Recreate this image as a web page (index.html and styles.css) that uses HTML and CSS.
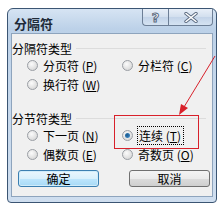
FILE: index.html
```html
<!DOCTYPE html>
<html lang="zh-CN">
<head>
    <meta charset="UTF-8">
    <title>分隔符</title>
    <link rel="stylesheet" href="styles.css">
</head>
<body>
    <div class="window">
        <div class="titlebar">
            <span class="title">分隔符</span>
            <div class="caption-btns">
                <span class="cbtn help">?</span>
                <span class="cbtn close">
                    <svg width="14" height="11" viewBox="0 0 14 11">
                        <path d="M2 1.5 L12 9.5 M12 1.5 L2 9.5" stroke="#5a6a80" stroke-width="3.4" stroke-linecap="round"/>
                        <path d="M2 1.5 L12 9.5 M12 1.5 L2 9.5" stroke="#fff" stroke-width="1.6" stroke-linecap="round"/>
                    </svg>
                </span>
            </div>
        </div>
        <div class="client">
            <div class="group-label first"><span>分隔符类型</span></div>
            <div class="options">
                <label class="opt"><span class="radio"></span>分页符 (<u>P</u>)</label>
                <label class="opt"><span class="radio"></span>分栏符 (<u>C</u>)</label>
                <label class="opt"><span class="radio"></span>换行符 (<u>W</u>)</label>
                <span></span>
            </div>
            <div class="group-label second"><span>分节符类型</span></div>
            <div class="options">
                <label class="opt"><span class="radio"></span>下一页 (<u>N</u>)</label>
                <label class="opt"><span class="radio checked"></span><span class="focus">连续 (<u>T</u>)</span></label>
                <label class="opt"><span class="radio"></span>偶数页 (<u>E</u>)</label>
                <label class="opt"><span class="radio"></span>奇数页 (<u>O</u>)</label>
            </div>
            <div class="buttons">
                <button class="btn default">确定</button>
                <button class="btn">取消</button>
            </div>
        </div>
    </div>

    <div class="callout-box"></div>
    <svg class="arrow" width="219" height="206" viewBox="0 0 219 206">
        <line x1="215" y1="56" x2="184" y2="107" stroke="#d8202a" stroke-width="1"/>
        <polygon points="179,115 181,104 188,108" fill="#d8202a"/>
    </svg>
</body>
</html>
```

FILE: styles.css
```css
body {
    margin: 0;
    background: #fff;
    font-family: "Noto Sans CJK SC", "Liberation Sans", sans-serif;
    font-size: 12px;
    color: #000;
}
.window {
    margin: 8px 0 0 7px;
    width: 202px;
    height: 190px;
    border: 1px solid #3b5573;
    border-radius: 6px 6px 4px 4px;
    background: linear-gradient(#d6e4f3, #bcd1e8 20px, #c3d6eb 60px, #cfdeef);
    padding: 0 3px 3px 3px;
    box-sizing: content-box;
}
.titlebar {
    height: 24px;
    display: flex;
    justify-content: space-between;
    align-items: flex-start;
}
.title {
    font-weight: bold;
    font-size: 13px;
    line-height: 16px;
    margin: 7px 0 0 3px;
    color: #1e2a38;
}
.caption-btns {
    display: flex;
    margin-right: 0px;
}
.cbtn {
    height: 16px;
    border: 1px solid #6d7f96;
    border-top: none;
    background: linear-gradient(#e8eff8, #d2dfee 50%, #c2d3e8 51%, #d5e3f2);
    display: flex;
    align-items: center;
    justify-content: center;
}
.cbtn.help {
    width: 25px;
    border-radius: 0 0 0 4px;
    border-right: none;
    font-family: "DejaVu Sans", sans-serif;
    font-weight: bold;
    font-size: 13px;
    color: #fff;
    -webkit-text-stroke: 1px #5a6a80;
}
.cbtn.close {
    width: 43px;
    border-radius: 0 0 4px 0;
}
.client {
    background: #f0f0f0;
    border: 1px solid #8ea4bd;
    height: 164px;
    box-sizing: border-box;
}
.group-label {
    display: flex;
    align-items: center;
    height: 16px;
    padding-left: 0;
}
.group-label::after {
    content: "";
    flex: 1;
    height: 1px;
    background: #dcdcdc;
    margin: 0 6px 0 4px;
}
.group-label.first {
    margin-top: 6px;
}
.group-label.second {
    margin-top: 16px;
}
.options {
    display: grid;
    grid-template-columns: 95px auto;
    grid-auto-rows: 19px;
    padding-left: 15px;
}
.opt {
    display: flex;
    align-items: center;
    white-space: nowrap;
}
.opt u {
    text-underline-offset: 1px;
}
.radio {
    width: 11px;
    height: 11px;
    border-radius: 50%;
    border: 1px solid #9a9ea4;
    background: radial-gradient(circle at 40% 35%, #fbfbfb, #dcdcdc 70%, #cfcfcf);
    margin-right: 5px;
    flex: none;
    box-sizing: border-box;
    position: relative;
}
.radio.checked::after {
    content: "";
    position: absolute;
    left: 2px;
    top: 2px;
    width: 5px;
    height: 5px;
    border-radius: 50%;
    background: radial-gradient(circle at 40% 40%, #1d5a8a, #2f7ab8 60%, #8cc0e8);
}
.focus {
    outline: 1px dotted #000;
    outline-offset: 0;
    padding: 0 2px 0 1px;
}
.buttons {
    display: flex;
    justify-content: space-between;
    padding: 0 2px 0 6px;
    margin-top: 6px;
}
.btn {
    width: 81px;
    height: 17px;
    padding: 0;
    font-family: inherit;
    font-size: 12px;
    line-height: 15px;
    border: 1px solid #707070;
    border-radius: 3px;
    background: linear-gradient(#f4f4f4, #ebebeb 50%, #dcdcdc 51%, #cfcfcf);
    color: #000;
}
.btn.default {
    border-color: #3c7fb1;
    background: linear-gradient(#eaf6fd, #d9f0fc 50%, #bee6fd 51%, #a7d9f5);
    box-shadow: inset 0 0 0 1px #d0ecfa;
}
.callout-box {
    position: absolute;
    left: 114px;
    top: 115px;
    width: 83px;
    height: 32px;
    border: 1px solid #d8202a;
}
.arrow {
    position: absolute;
    left: 0;
    top: 0;
    pointer-events: none;
}
```
